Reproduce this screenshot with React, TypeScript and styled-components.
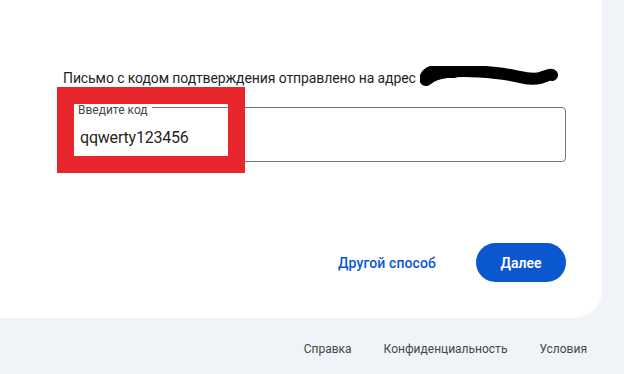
import styled, { createGlobalStyle } from 'styled-components';

const GlobalStyle = createGlobalStyle`
  html, body {
    margin: 0;
    padding: 0;
    background: #f0f4f9;
    font-family: Roboto, "Noto Sans", "Liberation Sans", sans-serif;
  }
`;

const Page = styled.div`
  width: 624px;
  height: 374px;
  display: flex;
  flex-direction: column;
  overflow: hidden;
  background: #f0f4f9;
`;

const Card = styled.main`
  width: 602px;
  height: 318px;
  box-sizing: border-box;
  padding: 68px 36px 36px 63px;
  display: flex;
  flex-direction: column;
  background: #ffffff;
  border-bottom-right-radius: 28px;
`;

const Message = styled.div`
  display: flex;
  align-items: center;
  height: 20px;
  font-size: 14px;
  line-height: 20px;
  color: #1f1f1f;
  letter-spacing: -0.1px;
`;

const Field = styled.div`
  position: relative;
  margin-top: 19px;
  height: 55px;
  box-sizing: border-box;
  display: flex;
  align-items: center;
  padding: 0 16px;
  border: 1px solid #747775;
  border-radius: 4px;
`;

const FieldLabel = styled.span`
  position: absolute;
  top: -4px;
  left: 10px;
  padding: 0 4px;
  background: #ffffff;
  font-size: 12px;
  line-height: 12px;
  color: #444746;
`;

const FieldValue = styled.span`
  font-size: 16px;
  color: #1f1f1f;
  margin-top: 5px;
  letter-spacing: -0.2px;
`;

const Annotation = styled.div`
  position: absolute;
  left: -7px;
  top: -21px;
  width: 188px;
  height: 86px;
  box-sizing: border-box;
  border: 17px solid #e8272c;
  pointer-events: none;
`;

const Actions = styled.div`
  margin-top: auto;
  display: flex;
  justify-content: flex-end;
  align-items: center;
  gap: 40px;
`;

const TextButton = styled.button`
  border: none;
  background: none;
  padding: 0;
  font-family: inherit;
  font-size: 14px;
  font-weight: 500;
  letter-spacing: 0.1px;
  color: #0b57d0;
  cursor: pointer;
`;

const PrimaryButton = styled.button`
  width: 90px;
  height: 39px;
  border: none;
  border-radius: 20px;
  background: #0b57d0;
  color: #ffffff;
  font-family: inherit;
  font-size: 14px;
  font-weight: 600;
  cursor: pointer;
`;

const Footer = styled.footer`
  flex: 1;
  display: flex;
  justify-content: flex-end;
  align-items: center;
  padding: 6px 21px 0 0;
`;

const FooterLink = styled.a`
  padding: 0 16px;
  font-size: 12px;
  color: #444746;
  text-decoration: none;
`;

const Scribble = () => (
  <svg width="138" height="24" viewBox="0 0 138 24" style={{ marginLeft: 4 }}>
    <path
      d="M9 12 C 22 3, 48 4, 76 7 C 98 9, 108 15, 120 12 C 126 10, 130 8, 132 9"
      fill="none"
      stroke="#000"
      strokeWidth="12"
      strokeLinecap="round"
    />
    <path d="M6 13 C 8 5, 20 4, 34 5" fill="none" stroke="#000" strokeWidth="14" strokeLinecap="round" />
  </svg>
);

export default function App() {
  return (
    <>
      <GlobalStyle />
      <Page>
        <Card>
          <Message>
            Письмо с кодом подтверждения отправлено на адрес
            <Scribble />
          </Message>
          <Field>
            <FieldLabel>Введите код</FieldLabel>
            <FieldValue>qqwerty123456</FieldValue>
            <Annotation />
          </Field>
          <Actions>
            <TextButton>Другой способ</TextButton>
            <PrimaryButton>Далее</PrimaryButton>
          </Actions>
        </Card>
        <Footer>
          <FooterLink href="#">Справка</FooterLink>
          <FooterLink href="#">Конфиденциальность</FooterLink>
          <FooterLink href="#">Условия</FooterLink>
        </Footer>
      </Page>
    </>
  );
}
